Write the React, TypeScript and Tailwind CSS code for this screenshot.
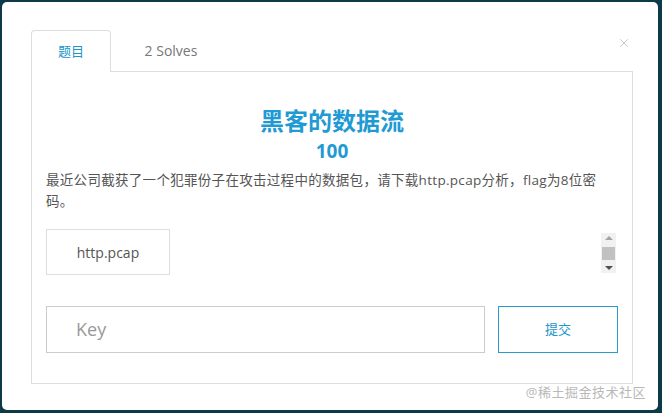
import { X } from 'lucide-react';

export default function App() {
  return (
    <div
      className="w-[662px] h-[413px] bg-[#0d3a48] pl-[2px] pt-[2px] pr-[4px] pb-[3px]"
      style={{ fontFamily: '"Open Sans", "Noto Sans CJK SC", sans-serif' }}
    >
      <div className="relative w-full h-full bg-white rounded-[5px] pt-[28px] pl-[29px] pr-[25px]">
        <X className="absolute right-[27px] top-[34px] w-[14px] h-[14px] text-[#c4c4c4]" strokeWidth={1.6} />

        {/* tabs */}
        <div className="flex h-[42px]">
          <div className="w-[80px] h-[42px] border border-b-0 border-[#dddddd] rounded-t-[4px] bg-white flex items-center justify-center text-[13px] text-[#2196c9] relative z-10">
            题目
          </div>
          <div className="flex-1 border-b border-[#dddddd] flex items-start">
            <span className="w-[120px] h-[41px] flex items-center justify-center text-[14px] text-[#777777]">2 Solves</span>
          </div>
        </div>

        {/* panel */}
        <div className="-mt-px h-[313px] border border-t-0 border-[#dddddd] px-[14px] pt-[35px]">
          <div className="text-center text-[24px] leading-[29px] font-bold text-[#1f9ad3]">黑客的数据流</div>
          <div className="text-center text-[19px] leading-[26px] font-bold text-[#1f9ad3] mt-[3px]">100</div>
          <p className="mt-[6px] w-[566px] text-[13.5px] leading-[21px] tracking-[0.3px] text-[#555555]">
            最近公司截获了一个犯罪份子在攻击过程中的数据包，请下载http.pcap分析，flag为8位密码。
          </p>

          <div className="mt-[17px] flex items-start justify-between pr-[2px]">
            <div className="w-[124px] h-[46px] border border-[#dddddd] flex items-center justify-center text-[14px] text-[#555555]">
              http.pcap
            </div>
            <div className="mt-[4px] w-[15px] h-[40px] bg-[#f1f1f1] flex flex-col items-center justify-between py-[3px]">
              <div className="w-0 h-0 border-l-[4px] border-r-[4px] border-b-[4px] border-l-transparent border-r-transparent border-b-[#a3a3a3]" />
              <div className="w-[13px] h-[13px] bg-[#c1c1c1]" />
              <div className="w-0 h-0 border-l-[4px] border-r-[4px] border-t-[4px] border-l-transparent border-r-transparent border-t-[#505050]" />
            </div>
          </div>

          <div className="mt-[31px] flex gap-[13px]">
            <div className="w-[440px] h-[47px] border border-[#cccccc] flex items-center pl-[29px] text-[18px] text-[#999999]">
              Key
            </div>
            <button className="w-[120px] h-[47px] border border-[#2a9bcf] text-[13px] text-[#2196c9] bg-white">
              提交
            </button>
          </div>
        </div>

        <div className="absolute right-[12px] bottom-[8px] text-[13px] text-[#b8b8b8] tracking-[0.5px]">@稀土掘金技术社区</div>
      </div>
    </div>
  );
}
